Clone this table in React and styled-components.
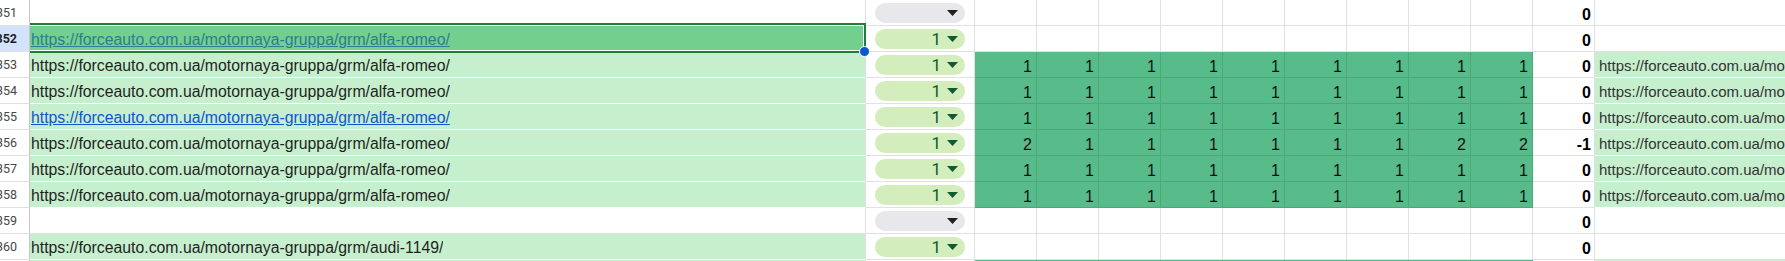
import React from 'react';
import styled, { createGlobalStyle, css } from 'styled-components';

const GlobalStyle = createGlobalStyle`
  html, body {
    margin: 0;
    padding: 0;
    background: #fff;
    overflow: hidden;
  }
  body {
    font-family: "Liberation Sans", Arial, sans-serif;
  }
`;

const Sheet = styled.div`
  width: 1785px;
  height: 261px;
  overflow: hidden;
`;

const Row = styled.div`
  display: grid;
  grid-template-columns: 30px 836px 109px repeat(10, 62px) 1fr;
  height: 26px;
`;

const Cell = styled.div`
  box-sizing: border-box;
  height: 26px;
  display: flex;
  overflow: hidden;
  white-space: nowrap;
  border-right: 1px solid #e1e1e1;
  border-bottom: 1px solid #e1e1e1;
`;

const RowHeader = styled(Cell)`
  justify-content: flex-end;
  align-items: center;
  padding-right: 12px;
  font-family: Roboto, "Liberation Sans", sans-serif;
  font-size: 12.5px;
  color: #444746;
  border-right-color: #c4c7c5;
  ${p => p.$active && css`
    background: #d3e3fd;
    color: #1f1f1f;
    font-weight: 700;
  `}
`;

const fills = {
  none: '#ffffff',
  light: '#c6efce',
  selected: '#72cf8e',
};

const UrlCell = styled(Cell)`
  position: relative;
  z-index: ${p => (p.$fill === 'selected' ? 2 : 0)};
  overflow: visible;
  align-items: flex-end;
  padding: 0 0 3px 1px;
  font-size: 15.8px;
  line-height: 17px;
  color: #1f1f1f;
  background: ${p => fills[p.$fill]};
  border-bottom-color: ${p => (p.$fill === 'none' ? '#e1e1e1' : '#ffffff')};
`;

const UrlText = styled.span`
  overflow: hidden;
  ${p => p.$link && css`
    color: ${p.$selected ? '#2b7d93' : '#1155cc'};
    text-decoration: underline;
  `}
`;

const SelectionFrame = styled.div`
  position: absolute;
  top: -3px;
  left: 0;
  right: -1px;
  bottom: -2px;
  border: 2px solid #1e7d3f;
  border-left: none;
  box-shadow: inset 0 1px 0 #fff, inset -1px 0 0 #fff, inset 0 -1px 0 #fff;
  pointer-events: none;
`;

const FillHandle = styled.div`
  position: absolute;
  right: -6px;
  bottom: -6px;
  width: 9px;
  height: 9px;
  border-radius: 50%;
  background: #0b57d0;
  border: 1px solid #fff;
`;

const ChipCell = styled(Cell)`
  padding: 3px 9px 0 9px;
`;

const Chip = styled.div`
  flex: 1;
  height: 20px;
  border-radius: 10px;
  display: flex;
  align-items: center;
  justify-content: flex-end;
  gap: 6px;
  padding-right: 7px;
  font-family: Roboto, "Liberation Sans", sans-serif;
  font-size: 17px;
  line-height: 1;
  background: ${p => (p.$tone === 'green' ? '#d4edbc' : '#e8e8ec')};
  color: ${p => (p.$tone === 'green' ? '#0f5a32' : '#1f1f1f')};
`;

const Arrow = styled.svg`
  width: 11px;
  height: 6px;
  fill: currentColor;
`;

const NumCell = styled(Cell)`
  justify-content: flex-end;
  align-items: flex-end;
  padding: 0 4px 2px 0;
  font-size: 16px;
  line-height: 17px;
  color: #111;
  ${p => p.$heat && css`
    background: #57bb8a;
    border-right-color: #4ea77b;
    border-bottom-color: #4ea77b;
  `}
`;

const TotalCell = styled(NumCell)`
  font-weight: 700;
  color: #000;
  padding-right: 3px;
`;

const TailCell = styled(Cell)`
  align-items: flex-end;
  padding: 0 0 3px 4px;
  font-size: 15px;
  line-height: 17px;
  color: #333;
  border-right: none;
  background: ${p => fills[p.$fill]};
  border-bottom-color: ${p => (p.$fill === 'none' ? '#e1e1e1' : '#ffffff')};
`;

const ALFA = 'https://forceauto.com.ua/motornaya-gruppa/grm/alfa-romeo/';
const AUDI = 'https://forceauto.com.ua/motornaya-gruppa/grm/audi-1149/';
const ONES = [1, 1, 1, 1, 1, 1, 1, 1, 1];

const rows = [
  { n: 1351, url: null, chip: 'gray', nums: null, total: 0, tail: null },
  { n: 1352, url: ALFA, link: true, selected: true, chip: 'green', nums: null, total: 0, tail: null },
  { n: 1353, url: ALFA, chip: 'green', nums: ONES, total: 0, tail: ALFA },
  { n: 1354, url: ALFA, chip: 'green', nums: ONES, total: 0, tail: ALFA },
  { n: 1355, url: ALFA, link: true, chip: 'green', nums: ONES, total: 0, tail: ALFA },
  { n: 1356, url: ALFA, chip: 'green', nums: [2, 1, 1, 1, 1, 1, 1, 2, 2], total: -1, tail: ALFA },
  { n: 1357, url: ALFA, chip: 'green', nums: ONES, total: 0, tail: ALFA },
  { n: 1358, url: ALFA, chip: 'green', nums: ONES, total: 0, tail: ALFA },
  { n: 1359, url: null, chip: 'gray', nums: null, total: 0, tail: null },
  { n: 1360, url: AUDI, chip: 'green', nums: null, total: 0, tail: null },
  { n: 1361, url: AUDI, chip: 'green', nums: ONES, total: 0, tail: AUDI },
];

function DropChip({ tone }) {
  return (
    <Chip $tone={tone}>
      {tone === 'green' && <span>1</span>}
      <Arrow viewBox="0 0 11 6"><path d="M0 0h11L5.5 6z" /></Arrow>
    </Chip>
  );
}

function SheetRow({ row }) {
  const fill = row.selected ? 'selected' : row.url ? 'light' : 'none';
  return (
    <Row>
      <RowHeader $active={row.selected}>{row.n}</RowHeader>
      <UrlCell $fill={fill}>
        {row.url && <UrlText $link={row.link} $selected={row.selected}>{row.url}</UrlText>}
        {row.selected && (
          <SelectionFrame>
            <FillHandle />
          </SelectionFrame>
        )}
      </UrlCell>
      <ChipCell>
        <DropChip tone={row.chip} />
      </ChipCell>
      {(row.nums || Array(9).fill(null)).map((v, i) => (
        <NumCell key={i} $heat={v !== null}>{v}</NumCell>
      ))}
      <TotalCell>{row.total}</TotalCell>
      <TailCell $fill={row.tail ? 'light' : 'none'}>{row.tail}</TailCell>
    </Row>
  );
}

export default function App() {
  return (
    <>
      <GlobalStyle />
      <Sheet>
        {rows.map(row => <SheetRow key={row.n} row={row} />)}
      </Sheet>
    </>
  );
}
